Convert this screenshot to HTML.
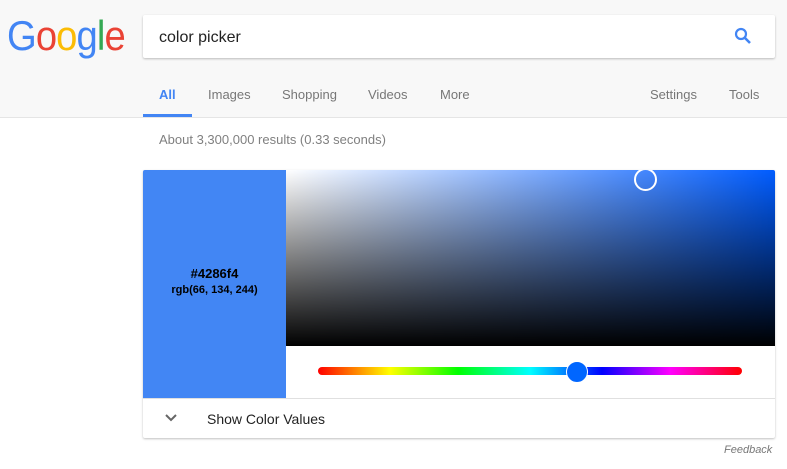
<!DOCTYPE html>
<html><head><style>
body{margin:0;width:787px;height:469px;background:#fff;font-family:Arial,"Liberation Sans",sans-serif;position:relative;overflow:hidden}
.hdr{position:absolute;left:0;top:0;width:787px;height:117px;background:#f8f8f8;border-bottom:1px solid #e5e5e5}
.logo{position:absolute;left:7px;top:12px;font-size:42px;letter-spacing:-1px;font-family:"Liberation Sans",Arial,sans-serif;transform:scaleX(0.91);transform-origin:left top}
.sb{position:absolute;left:143px;top:15px;width:632px;height:43px;background:#fff;box-shadow:0 1px 2px rgba(0,0,0,.25);border-radius:2px}
.sb span{position:absolute;left:16px;top:14px;font-size:16px;color:#222}
.tab{position:absolute;top:87px;font-size:13px;color:#777}
.res{position:absolute;left:159px;top:132px;font-size:13px;color:#808080}
.card{position:absolute;left:143px;top:170px;width:632px;height:268px;background:#fff;box-shadow:0 1px 2px rgba(0,0,0,.25);border-radius:2px;overflow:hidden}
.sw{position:absolute;left:0;top:0;width:143px;height:228px;background:#4286f4;text-align:center;font-weight:bold}
.grad{position:absolute;left:143px;top:0;width:489px;height:176px;background:linear-gradient(to top,#000,rgba(0,0,0,0)),linear-gradient(to right,#fff,#005cff)}
.hue{position:absolute;left:175px;top:197px;width:424px;height:8px;border-radius:4px;background:linear-gradient(to right,#f00,#ff0 17%,#0f0 33%,#0ff 50%,#00f 67%,#f0f 83%,#f00)}
.bot{position:absolute;left:0;top:228px;width:632px;height:40px;border-top:1px solid #e0e0e0}
</style></head><body>
<div class="hdr"></div>
<div class="logo"><span style="color:#4285f4">G</span><span style="color:#ea4335">o</span><span style="color:#fbbc05">o</span><span style="color:#4285f4">g</span><span style="color:#34a853">l</span><span style="color:#ea4335">e</span></div>
<div class="sb"><span>color picker</span>
<svg style="position:absolute;left:591px;top:12px" width="18" height="18" viewBox="0 0 18 18"><circle cx="7" cy="7" r="5" fill="none" stroke="#4285f4" stroke-width="2.2"/><path d="M10.5 10.5L16 16" stroke="#4285f4" stroke-width="2.6"/></svg></div>
<div class="tab" style="left:159px;color:#4285f4;font-weight:bold">All</div>
<div style="position:absolute;left:143px;top:114px;width:49px;height:3px;background:#4285f4"></div>
<div class="tab" style="left:208px">Images</div>
<div class="tab" style="left:282px">Shopping</div>
<div class="tab" style="left:368px">Videos</div>
<div class="tab" style="left:440px">More</div>
<div class="tab" style="left:650px">Settings</div>
<div class="tab" style="left:729px">Tools</div>
<div class="res">About 3,300,000 results (0.33 seconds)</div>
<div class="card">
<div class="sw"><div style="margin-top:96px;font-size:13px">#4286f4</div><div style="font-size:11px;margin-top:3px">rgb(66, 134, 244)</div></div>
<div class="grad"></div>
<div style="position:absolute;left:491px;top:-2px;width:19px;height:19px;border:2px solid #fff;border-radius:50%"></div>
<div class="hue"></div>
<div style="position:absolute;left:423px;top:191px;width:20px;height:20px;border-radius:50%;background:#0066ff;border:1px solid #fff"></div>
<div class="bot">
<svg style="position:absolute;left:21px;top:14px" width="14" height="10" viewBox="0 0 14 10"><path d="M2 2l5 5 5-5" fill="none" stroke="#666" stroke-width="2"/></svg>
<span style="position:absolute;left:64px;top:12px;font-size:14px;color:#222">Show Color Values</span></div>
</div>
<div style="position:absolute;left:724px;top:444px;font-size:11px;font-style:italic;color:#777">Feedback</div>
</body></html>
